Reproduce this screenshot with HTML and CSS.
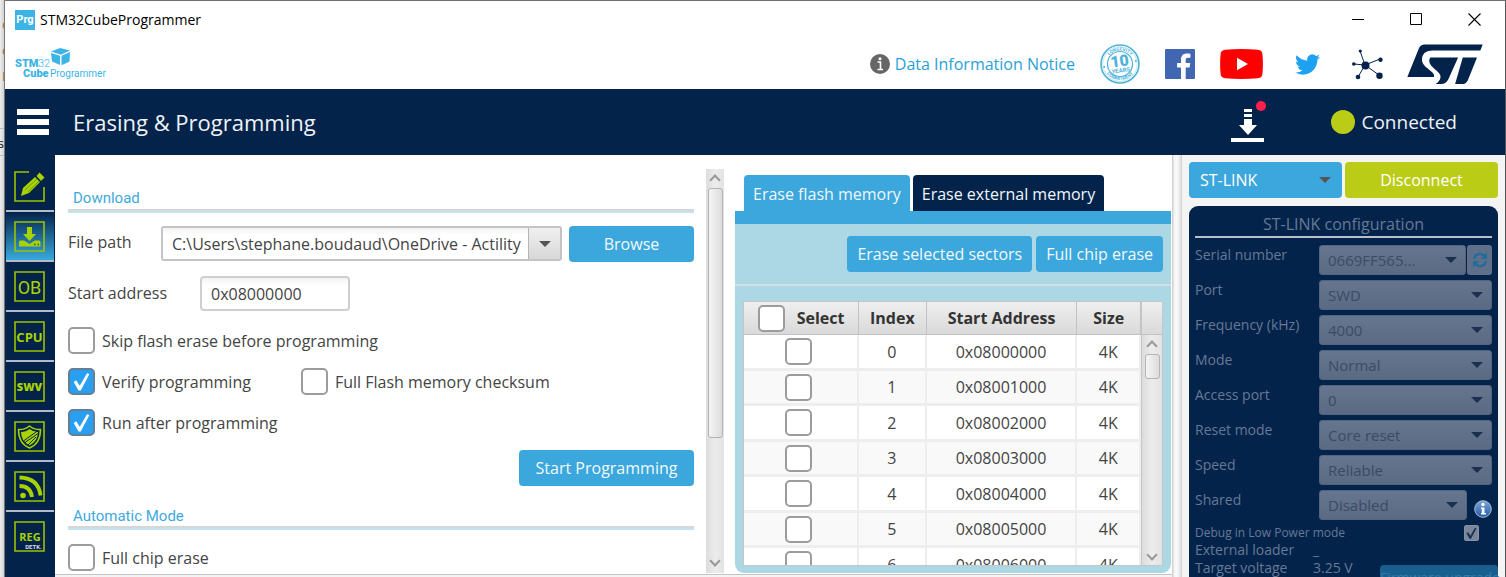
FILE: index.html
```html
<!DOCTYPE html>
<html lang="en">
<head>
<meta charset="utf-8">
<title>STM32CubeProgrammer</title>
<link rel="stylesheet" href="styles.css">
</head>
<body>
<div class="backdrop" aria-hidden="true"><i>c</i><i>c</i><i>F</i><b>s</b></div>
<div class="window">
  <header class="titlebar">
    <span class="app-icon">Prg</span>
    <span class="app-title">STM32CubeProgrammer</span>
    <div class="window-controls">
      <button type="button" aria-label="Minimize"><svg width="13" height="13" viewBox="0 0 13 13"><path d="M0 6.5h12" stroke="#000" fill="none"/></svg></button>
      <button type="button" aria-label="Maximize"><svg width="13" height="13" viewBox="0 0 13 13"><path d="M.5 .5h11v11H.5z" stroke="#000" fill="none"/></svg></button>
      <button type="button" aria-label="Close"><svg width="13" height="13" viewBox="0 0 13 13"><path d="M.5 .5l12 12M12.5 .5l-12 12" stroke="#000" stroke-width="1.1" fill="none"/></svg></button>
    </div>
  </header>

  <div class="brandbar">
    <svg class="product-logo" width="98" height="34" viewBox="0 0 98 34" role="img" aria-label="STM32CubeProgrammer">
      <g fill="#3cb4e6" font-family="Roboto, sans-serif" font-size="11">
        <text x="0" y="20" font-weight="900">STM</text>
        <text x="23" y="20" font-weight="300">32</text>
        <text x="8" y="30" font-weight="900">Cube</text>
        <text x="35" y="30" font-size="10">Programmer</text>
        <path d="M36 4.600l9-3.600 10 2.600-9 4.200z"/><path d="M36 6l9 2.800v9.200l-8-3.500z"/><path d="M46.500 8.800L55 5l-.5 9.500-8 3.800z"/>
      </g>
    </svg>
    <nav class="links">
      <a class="notice" href="#notice">
        <svg width="20" height="20" viewBox="0 0 20 20"><circle cx="10" cy="10" r="10" fill="#666"/><circle cx="10" cy="4.700" r="1.500" fill="#fff"/><path d="M7.500 8H10.500v7.500M7.500 15.500H13" stroke="#fff" stroke-width="1.600" fill="none"/></svg>
        <span>Data Information Notice</span>
      </a>
      <a class="badge" href="#longevity" aria-label="10 years longevity commitment">
        <svg width="40" height="40" viewBox="0 0 40 40">
          <circle cx="20" cy="20" r="19" fill="none" stroke="#4fb3dc" stroke-width="1.600"/>
          <circle cx="20" cy="20" r="17.300" fill="none" stroke="#9bd3eb" stroke-width=".6"/>
          <circle cx="20" cy="20" r="12.500" fill="none" stroke="#4fb3dc" stroke-width="1.200"/>
          <path id="arc-top" d="M7.500 14.500A13.800 13.800 0 0 1 32.500 14.500" fill="none"/>
          <path id="arc-bottom" d="M4.500 26A17 17 0 0 0 35.500 26" fill="none"/>
          <g fill="#4fb3dc" font-family="Roboto, sans-serif" font-weight="700">
            <text font-size="4.500"><textPath href="#arc-top" startOffset="50%" text-anchor="middle">LONGEVITY</textPath></text>
            <text font-size="4.500"><textPath href="#arc-bottom" startOffset="50%" text-anchor="middle">COMMITMENT</textPath></text>
            <g transform="rotate(-8 20 20)"><text x="20" y="22.500" font-size="16" font-weight="900" text-anchor="middle">10</text><text x="20" y="28.500" font-size="6" text-anchor="middle">YEARS</text></g>
            <circle cx="4.200" cy="23" r="1"/><circle cx="35.800" cy="17" r="1"/>
          </g>
        </svg>
      </a>
      <a class="facebook" href="#facebook" aria-label="Facebook">
        <svg width="30" height="30" viewBox="0 0 30 30"><rect width="30" height="30" rx="1" fill="#4267b2"/><path d="M20.700 30V18.500h3.900l.6-4.600h-4.500V11c0-1.300.4-2.200 2.300-2.200h2.400V4.700c-.4 0-1.900-.2-3.500-.2-3.500 0-5.900 2.100-5.900 6v3.400h-3.900v4.600H16V30z" fill="#fff"/></svg>
      </a>
      <a class="youtube" href="#youtube" aria-label="YouTube">
        <svg width="43" height="30" viewBox="0 0 43 30"><path d="M5 .8Q21.500-.8 38 .8 42 1.200 42.400 5q1 10 0 20-.4 3.800-4.400 4.200-16.500 1.600-33 0Q1 28.800.6 25q-1-10 0-20Q1 1.200 5 .8z" fill="#f00"/><path d="M17 8.800v12.400L28 15z" fill="#fff"/></svg>
      </a>
      <a class="twitter" href="#twitter" aria-label="Twitter">
        <svg width="25" height="21" viewBox="0 2 24 20"><path fill="#1da1f2" d="M23.950 4.570a10 10 0 0 1-2.820.77 4.960 4.960 0 0 0 2.160-2.720c-.95.55-2 .95-3.120 1.190a4.920 4.920 0 0 0-8.380 4.480C7.690 8.090 4.070 6.130 1.640 3.160a4.930 4.930 0 0 0 1.520 6.570 4.900 4.900 0 0 1-2.230-.61v.06c0 2.390 1.710 4.370 3.950 4.830a5 5 0 0 1-2.210.08 4.940 4.940 0 0 0 4.600 3.420A9.870 9.870 0 0 1 0 19.540 14 14 0 0 0 7.550 21.750c9.050 0 14-7.500 14-13.980 0-.21 0-.42-.02-.63a9.940 9.940 0 0 0 2.460-2.550z"/></svg>
      </a>
      <a class="community" href="#community" aria-label="Community">
        <svg width="31" height="31" viewBox="0 0 31 31"><path d="M13 16L8 2M13 16L2 15M13 16l15-6M13 16l14 10M13 16L6 28" stroke="#03234b" fill="none"/><g fill="#03234b"><circle cx="13.500" cy="16.500" r="4"/><circle cx="8.300" cy="2" r="1.600"/><circle cx="1.800" cy="15" r="1.800"/><circle cx="28.500" cy="10.800" r="2.200"/><circle cx="27.500" cy="26.800" r="3.200"/><circle cx="6" cy="28" r="2.300"/></g></svg>
      </a>
      <a class="st" href="#st" aria-label="ST">
        <svg width="76" height="41" viewBox="682 131 229 122"><g fill="#03234b"><path d="M683 230l35-87q5-11 17-11h175l-7 18H757q-30 1-30 28 0 11 11 21l18 15q10 8 7 16z"/><path d="M752 171h84l-29 65q-7 15-22 15h-17q15-10 15-23 0-9-17-22-25-19-14-35z"/><path d="M850 171h43l-28 69q-5 11-17 11h-21z"/></g></svg>
      </a>
    </nav>
  </div>

  <div class="headbar">
    <button class="menu" type="button" aria-label="Menu"><span></span><span></span><span></span></button>
    <h1>Erasing &amp; Programming</h1>
    <button class="updates" type="button" aria-label="Updates">
      <svg width="36" height="42" viewBox="0 0 36 42"><g fill="#fff"><path d="M13 8h8v3h-8zM13 13h8v3h-8zM13 18h8v6h5l-9 10-9-10h5zM0 37h33v4H0z"/></g><circle cx="30" cy="5" r="5" fill="#ff1f4b"/></svg>
    </button>
    <div class="status"><span class="lamp"></span><span>Connected</span></div>
  </div>

  <div class="main">
    <nav class="sidebar">
      <a href="#edit" aria-label="Memory and file editing"><svg width="31" height="31" viewBox="0 0 31 31"><path d="M15 1H1v29h29V16" fill="none" stroke="#9bc400" stroke-width="1.600"/><g fill="#a9d300"><path d="M7 25l2-8L21 6l5 5-11 11z"/><path d="M22.500 5l3-3.500 5 5-3.500 3.500z"/></g><path d="M11 19L23 8M14 21l11-11" stroke="#5e8515" stroke-width=".7"/></svg></a>
      <a class="active" href="#erase" aria-label="Erasing and programming"><svg width="31" height="31" viewBox="0 0 31 31"><path d="M1 1h29v29H1z" fill="none" stroke="#9bc400" stroke-width="1.600"/><path d="M13 6h5v7h4l-6.500 7L9 13h4zM5 21q0-1.500 1.500-1.500H10l5.500 3.500 5.500-3.500h4q1.500 0 1.500 1.500v4.500H5z" fill="#a9d300"/><path d="M20 23.500h1.500M23.500 23.500H25" stroke="#1b5a73" stroke-width="1.400"/></svg></a>
      <a href="#ob" aria-label="Option bytes"><svg width="31" height="31" viewBox="0 0 31 31"><path d="M1 1h29v29H1z" fill="none" stroke="#9bc400" stroke-width="1.600"/><text x="15.500" y="22.500" text-anchor="middle" font-family="Roboto, sans-serif" font-size="18" fill="#a9d300">OB</text></svg></a>
      <a href="#cpu" aria-label="CPU"><svg width="31" height="31" viewBox="0 0 31 31"><path d="M1 1h29v29H1z" fill="none" stroke="#9bc400" stroke-width="1.600"/><text x="15.500" y="21" text-anchor="middle" font-family="Open Sans, sans-serif" font-weight="700" font-size="13" fill="#a9d300">CPU</text></svg></a>
      <a href="#swv" aria-label="Serial wire viewer"><svg width="31" height="31" viewBox="0 0 31 31"><path d="M1 1h29v29H1z" fill="none" stroke="#9bc400" stroke-width="1.600"/><text x="15.500" y="19.500" text-anchor="middle" font-family="Open Sans, sans-serif" font-weight="800" font-size="11" fill="#a9d300">SWV</text></svg></a>
      <a href="#security" aria-label="Security"><svg width="31" height="31" viewBox="0 0 31 31"><path d="M1 1h29v29H1z" fill="none" stroke="#9bc400" stroke-width="1.600"/><path d="M15.500 5q5 4 11 3.500 0 14-11 18.500Q4.500 22.500 4.500 8.500 10.500 9 15.500 5z" fill="none" stroke="#a9d300" stroke-width="1.500"/><path d="M15.500 8q4 3 8.500 3 0 9-8.500 13.500Q7 20 7 11q5 0 8.500-3z" fill="#a9d300"/><path d="M9.500 20L24 9.500M11 21.500L24 12.500M14 24l8-8" stroke="#03234b" stroke-width="1"/></svg></a>
      <a href="#update" aria-label="Over the air"><svg width="31" height="31" viewBox="0 0 31 31"><path d="M1 1h29v29H1z" fill="none" stroke="#9bc400" stroke-width="1.600"/><circle cx="9" cy="24.500" r="2.800" fill="#a9d300"/><path d="M5.500 15q11 0 12.500 11M5.500 6.500Q24.500 7 26.500 24.500" fill="none" stroke="#a9d300" stroke-width="3.800"/></svg></a>
      <a href="#registers" aria-label="Registers"><svg width="31" height="31" viewBox="0 0 31 31"><path d="M1 1h29v29H1z" fill="none" stroke="#9bc400" stroke-width="1.600"/><text x="16" y="20" text-anchor="middle" font-family="Open Sans, sans-serif" font-weight="700" font-size="11" fill="#a9d300">REG</text><text x="19.500" y="27.500" text-anchor="middle" font-family="Roboto, sans-serif" font-weight="700" font-size="6" fill="#d4dbe5">DETK.</text></svg></a>
    </nav>

    <div class="workspace">
      <div class="scroll-pane">
        <form class="form">
          <section>
            <h2>Download</h2>
            <div class="field">
              <label for="path">File path</label>
              <div class="combo"><input id="path" type="text" value="C:\Users\stephane.boudaud\OneDrive - Actility"><button type="button" aria-label="Recent files"></button></div>
              <button class="btn browse" type="button">Browse</button>
            </div>
            <div class="field address">
              <label for="addr">Start address</label>
              <input id="addr" type="text" value="0x08000000">
            </div>
            <div class="options">
              <label><input type="checkbox"><span>Skip flash erase before programming</span></label>
              <div class="pair">
                <label><input type="checkbox" checked><span>Verify programming</span></label>
                <label><input type="checkbox"><span>Full Flash memory checksum</span></label>
              </div>
              <label><input type="checkbox" checked><span>Run after programming</span></label>
            </div>
            <button class="btn start" type="button">Start Programming</button>
          </section>
          <section class="auto">
            <h2>Automatic Mode</h2>
            <label><input type="checkbox"><span>Full chip erase</span></label>
          </section>
        </form>
        <div class="scrollbar"><span class="up"></span><span class="thumb"></span><span class="down"></span></div>
      </div>

      <section class="erase">
        <div class="tabs" role="tablist">
          <button type="button" role="tab" aria-selected="true">Erase flash memory</button>
          <button type="button" role="tab" aria-selected="false">Erase external memory</button>
        </div>
        <div class="actions">
          <button class="btn" type="button">Erase selected sectors</button>
          <button class="btn" type="button">Full chip erase</button>
        </div>
        <div class="sectors">
          <table>
            <thead><tr><th><label><input type="checkbox"><span>Select</span></label></th><th>Index</th><th>Start Address</th><th>Size</th></tr></thead>
            <tbody>
              <tr><td><input type="checkbox" aria-label="Sector 0"></td><td>0</td><td>0x08000000</td><td>4K</td></tr>
              <tr><td><input type="checkbox" aria-label="Sector 1"></td><td>1</td><td>0x08001000</td><td>4K</td></tr>
              <tr><td><input type="checkbox" aria-label="Sector 2"></td><td>2</td><td>0x08002000</td><td>4K</td></tr>
              <tr><td><input type="checkbox" aria-label="Sector 3"></td><td>3</td><td>0x08003000</td><td>4K</td></tr>
              <tr><td><input type="checkbox" aria-label="Sector 4"></td><td>4</td><td>0x08004000</td><td>4K</td></tr>
              <tr><td><input type="checkbox" aria-label="Sector 5"></td><td>5</td><td>0x08005000</td><td>4K</td></tr>
              <tr><td><input type="checkbox" aria-label="Sector 6"></td><td>6</td><td>0x08006000</td><td>4K</td></tr>
            </tbody>
          </table>
          <div class="table-side"><div class="corner"></div><div class="scrollbar"><span class="up"></span><span class="thumb"></span><span class="down"></span></div></div>
        </div>
      </section>
    </div>

    <div class="splitter"></div>

    <aside class="connection">
      <div class="link-row">
        <span class="select link"><select aria-label="Interface"><option>ST-LINK</option></select></span>
        <button class="btn disconnect" type="button">Disconnect</button>
      </div>
      <section class="config">
        <h2>ST-LINK configuration</h2>
        <div class="row"><label for="serial">Serial number</label><span class="select"><select id="serial" disabled><option>0669FF565...</option></select></span>
          <button class="refresh" type="button" disabled aria-label="Refresh"><svg width="16" height="16" viewBox="0 0 16 16"><path d="M2 7a6 6 0 0 1 10.500-3M14 9a6 6 0 0 1-10.500 3" fill="none" stroke="#226c9c" stroke-width="2.400"/><path d="M15 .5V7H8.500zM1 15.500V9h6.500z" fill="#226c9c"/></svg></button></div>
        <div class="row"><label for="port">Port</label><span class="select"><select id="port" disabled><option>SWD</option></select></span></div>
        <div class="row"><label for="freq">Frequency (kHz)</label><span class="select"><select id="freq" disabled><option>4000</option></select></span></div>
        <div class="row"><label for="mode">Mode</label><span class="select"><select id="mode" disabled><option>Normal</option></select></span></div>
        <div class="row"><label for="ap">Access port</label><span class="select"><select id="ap" disabled><option>0</option></select></span></div>
        <div class="row"><label for="reset">Reset mode</label><span class="select"><select id="reset" disabled><option>Core reset</option></select></span></div>
        <div class="row"><label for="speed">Speed</label><span class="select"><select id="speed" disabled><option>Reliable</option></select></span></div>
        <div class="row"><label for="shared">Shared</label><span class="select"><select id="shared" disabled><option>Disabled</option></select></span>
          <svg class="info" width="18" height="18" viewBox="0 0 18 18"><defs><linearGradient id="orb" x2="0" y2="1"><stop stop-color="#7fa5d8"/><stop offset="1" stop-color="#1f5cab"/></linearGradient></defs><circle cx="9" cy="9" r="8.300" fill="url(#orb)" stroke="#a9bcd8" stroke-width="1"/><circle cx="9" cy="4.500" r="1.700" fill="#fff"/><path d="M7 7.500h3.500V13H12v1.500H7V13h.8V9H7z" fill="#fff"/></svg></div>
        <div class="row low"><label for="low">Debug in Low Power mode</label><input id="low" type="checkbox" checked disabled></div>
        <div class="facts">
          <dl><dt>External loader</dt><dd>_</dd><dt>Target voltage</dt><dd>3.25 V</dd></dl>
          <button class="btn firmware" type="button" disabled>Firmware upgrade</button>
        </div>
      </section>
    </aside>
  </div>
</div>
</body>
</html>
```
FILE: styles.css
```css
* { box-sizing: border-box; }
body {
  margin: 0;
  height: 100vh;
  display: flex;
  overflow: hidden;
  background: #fff;
  color: #444;
  font: 16px/20px "Open Sans", "Noto Sans", sans-serif;
}
h1, h2, dl, dd { margin: 0; font-weight: 400; }
button, input, select { font: inherit; color: inherit; margin: 0; }
button { border: 0; padding: 0; background: none; }
a { text-decoration: none; }
svg { display: block; flex: none; }

.backdrop {
  flex: none;
  width: 5px;
  height: 100%;
  overflow: hidden;
  display: flex;
  flex-direction: column;
  background: linear-gradient(90deg, #ededed, #d2d2d2);
  border-right: 1px solid #777;
  font-size: 13px;
}
.backdrop i, .backdrop b { font-style: normal; font-weight: 400; height: 26px; padding: 14px 0 0 2px; color: #8a7248; line-height: 20px; flex: none; }
.backdrop b { height: 28px; margin-top: 50px; padding: 4px 0 0; color: #111; border: solid #bbb; border-width: 1px 0; direction: rtl; }

.window { flex: 1; min-width: 0; display: flex; flex-direction: column; border-top: 1px solid #717171; border-right: 1px solid #555; }

.titlebar { flex: none; height: 38px; display: flex; align-items: center; gap: 5px; padding: 0 24px 1px 10px; color: #000; font-size: 14px; }
.app-icon { width: 20px; height: 20px; background: #3cb4e6; color: #fff; font: 700 11px/20px Roboto, sans-serif; text-align: center; }
.window-controls { margin-left: auto; display: flex; gap: 45px; }

.brandbar { flex: none; height: 50px; display: flex; align-items: center; justify-content: space-between; padding: 0 22px 0 10px; }
.links { display: flex; align-items: center; }
.notice { display: flex; align-items: center; gap: 5px; color: #27a2d9; }
.badge, .facebook, .youtube { margin-left: 25px; }
.twitter, .community { margin-left: 32px; }
.st { margin-left: 24px; }

.headbar { flex: none; height: 66px; display: flex; align-items: center; padding: 0 48px 1px 12px; background: #03234b; color: #f0f2f5; }
.menu { display: flex; flex-direction: column; gap: 4px; width: 32px; margin-right: 24px; }
.menu span { height: 6px; background: #fff; }
.headbar h1 { font-size: 22px; line-height: 30px; }
.updates { margin-left: auto; margin-right: 64px; }
.status { display: flex; align-items: center; gap: 6px; font-size: 19px; line-height: 28px; }
.lamp { width: 24px; height: 24px; border-radius: 50%; background: #bbcc16; }

.main { flex: 1; min-height: 0; display: flex; background: #f4f4f4; }

.sidebar { flex: none; width: 50px; padding: 7px 1px 0; background: #03234b; }
.sidebar a { display: flex; justify-content: center; align-items: center; height: 50px; padding-right: 1px; border-bottom: 2px solid #b4bbc7; }
.sidebar a:last-child { border-bottom: 0; padding-bottom: 2px; }
.sidebar .active { background: linear-gradient(#03234b, #39a9dc); }

.workspace { flex: 1; min-width: 0; display: grid; grid-template-columns: minmax(0, 669fr) minmax(0, 436fr); grid-template-rows: minmax(0, 1fr); gap: 11px; padding: 0 1px 1px 0; margin-bottom: 2px; background: #fff; border-bottom: 1px solid #c4c4c4; }
.scroll-pane { display: flex; gap: 12px; padding: 14px 0 0 13px; min-width: 0; }
.form { flex: 1; min-width: 0; padding-top: 19px; overflow: hidden; }
.form h2 { height: 23px; padding: 0 5px; color: #3fa9dd; font: 15px/21px Roboto, "Liberation Sans", sans-serif; border-bottom: 2px solid #d3d8da; box-shadow: 0 2px #c3e3ee; }
.field { display: flex; margin-top: 15px; }
.field label { width: 93px; padding-top: 6px; }
.field.address { margin-top: 14px; }
.field.address label { width: 132px; padding-top: 7px; }
.combo { flex: 1; display: flex; min-width: 0; height: 35px; border: 2px solid #c4c4c4; border-radius: 3px; }
.combo input { flex: 1; min-width: 0; border: 0; padding: 0 0 0 9px; background: linear-gradient(#f3f3f3, #fff 7px); }
.combo button { display: flex; align-items: center; justify-content: center; width: 32px; border-left: 1px solid #b5b5b5; background: linear-gradient(#f0f0f0, #d8d8d8); }
.combo button::before { content: ""; border: 6px solid transparent; border-top-color: #555; border-bottom: 0; }
.address input { width: 150px; height: 35px; padding: 0 9px; border: 2px solid #cfcfcf; border-radius: 4px; background: linear-gradient(#f3f3f3, #fff 7px); }
.btn { height: 36px; border-radius: 4px; background: #3ba7dc; color: #f2f9fd; text-align: center; white-space: nowrap; }
.browse { width: 125px; margin-left: 7px; }
.options { display: grid; gap: 14px; margin-top: 16px; }
.form .options label, .auto label { display: flex; align-items: center; gap: 7px; }
.pair { display: flex; gap: 50px; }
input[type="checkbox"] { appearance: none; flex: none; display: grid; place-items: center; width: 27px; height: 27px; border: 2px solid #9c9c9c; border-radius: 5px; background: #fff; }
input[type="checkbox"]:checked { background: #289ff0; border-color: #637f95; }
input[type="checkbox"]:checked::before { content: ""; width: 19px; height: 19px; background: #fff; clip-path: polygon(9% 52%, 22% 44%, 41% 72%, 79% 6%, 92% 10%, 46% 98%, 34% 98%); }
.start { display: block; width: 175px; margin: 14px 0 0 auto; }
.auto { margin-top: 20px; }
.form .auto h2 { height: 22px; }
.auto label { margin-top: 16px; }

.scrollbar { flex: none; display: flex; flex-direction: column; align-items: center; width: 18px; background: linear-gradient(90deg, #dcdcdc, #ececec 50%, #e3e3e3); }
.scrollbar .up, .scrollbar .down { width: 8px; height: 8px; border: solid #999; border-width: 2px 0 0 2px; transform: rotate(45deg); flex: none; }
.scrollbar .up { margin: 7px 0 4px; }
.scrollbar .down { margin: auto 0 8px; transform: rotate(225deg); }
.scrollbar .thumb { width: 15px; border: 1px solid #b3b3b3; border-radius: 3px; background: linear-gradient(90deg, #f5f5f5, #dcdcdc); height: 250px; }

.erase { min-width: 0; display: flex; flex-direction: column; padding-top: 20px; }
.tabs { flex: none; display: flex; gap: 3px; height: 49px; padding: 0 9px; border-bottom: 13px solid #3ba7dc; }
.tabs button { padding: 2px 9px 0; border-radius: 4px 4px 0 0; background: #03234b; color: #f2f6fa; white-space: nowrap; }
.tabs [aria-selected="true"] { background: #3ba7dc; }
.actions { flex: none; display: flex; justify-content: flex-end; gap: 4px; padding: 12px 8px; background: #acd8e6; border-bottom: 2px solid #cfdfe5; }
.actions .btn { padding: 0 10px; }
.sectors { flex: 1; min-height: 0; display: flex; padding: 15px 8px 7px; background: #acd8e6; border-radius: 0 0 9px 9px; overflow: hidden; }
table { flex: 1; min-width: 0; height: 100%; display: block; overflow: hidden; border: 1px solid #c6c6c6; background: #fff; border-spacing: 0; }
thead, tbody { display: table; width: 100%; table-layout: fixed; border-spacing: 0; }
th, td { padding: 0; text-align: center; }
th { height: 33px; background: linear-gradient(#efefef, #d9d9d9); border-right: 1px solid #c2c2c2; border-bottom: 1px solid #c2c2c2; color: #333; }
th:nth-child(1), td:nth-child(1) { width: 29%; }
th:nth-child(2), td:nth-child(2) { width: 17%; }
th:nth-child(4), td:nth-child(4) { width: 16%; }
th label { display: flex; align-items: center; justify-content: center; gap: 12px; }
td { height: 36px; border-right: 2px solid #eee; border-bottom: 3px solid #eee; }
td:first-child { padding-right: 5px; }
tr:nth-child(even) td { height: 35px; background: #f9f9f9; }
td input[type="checkbox"] { margin: 0 auto; }
.table-side { width: 21px; display: flex; flex-direction: column; border: 1px solid #c6c6c6; border-left: 0; }
.corner { height: 33px; flex: none; background: linear-gradient(#efefef, #d9d9d9); border-bottom: 1px solid #c2c2c2; }
.table-side .scrollbar { flex: 1; width: auto; }
.table-side .thumb { height: 25px; }
.table-side .down { margin-bottom: 6px; }

.splitter { flex: none; width: 11px; background: linear-gradient(90deg, #d2d2d2 1px, #f4f4f4 2px, #fafafa 5px, #dedede 9px, #c8c8c8 10px, #f4f4f4 10px); }

.connection { flex: none; width: 322px; padding: 7px 7px 0 6px; display: flex; flex-direction: column; gap: 8px; overflow: hidden; background: #f4f4f4; }
.link-row { display: flex; gap: 3px; }
.link-row > * { flex: 1; }
.btn.disconnect { background: #bbcc16; color: #fff; }
.select { position: relative; display: flex; }
.select::after { content: ""; position: absolute; right: 9px; top: 15px; margin-top: -3px; border: 6px solid transparent; border-top-color: #1b3050; border-bottom: 0; pointer-events: none; }
select { appearance: none; flex: 1; min-width: 0; width: 100%; height: 30px; padding: 0 8px; border: 1px solid #52647f; border-radius: 3px; background: linear-gradient(#66768e, #5a6a83); color: #3a4b66; opacity: 1; }
.link select { height: 36px; padding: 0 11px; border: 0; border-radius: 4px; background: #3ba7dc; color: #fff; }
.link::after { border-top-color: #555; right: 11px; top: 18px; }
.config { flex: none; padding: 8px 6px 0; border-radius: 9px 9px 0 0; background: #03234b; color: #667995; font-size: 14px; display: flex; flex-direction: column; }
.config h2 { height: 24px; margin-bottom: 7px; border-bottom: 2px solid #b9c0cb; text-align: center; font-size: 16px; line-height: 20px; }
.row { display: flex; height: 35px; line-height: 20px; }
.row label { width: 124px; flex: none; }
.row .select { flex: 1; font-size: 15px; }
.refresh { width: 25px; height: 30px; margin-left: 1px; display: grid; place-items: center; border-radius: 3px; background: #60708a; }
.info { margin: 10px 0 0 7px; }
.row.low { height: 16px; font-size: 12px; align-items: center; justify-content: space-between; padding-right: 13px; }
.low label { width: auto; }
.low input[type="checkbox"] { width: 15px; height: 16px; border: 1px solid #8591a4; border-radius: 2px; background: #7a879b; }
.low input[type="checkbox"]:checked::before { width: 12px; height: 12px; background: #1b3050; }
.facts { display: flex; justify-content: space-between; margin-right: -6px; line-height: 18px; }
dl { display: grid; grid-template-columns: 118px auto; align-content: start; }
.firmware { width: 118px; height: 26px; margin-top: 24px; background: #185f8f; color: #3a7ca6; line-height: 18px; flex: none; }
```
